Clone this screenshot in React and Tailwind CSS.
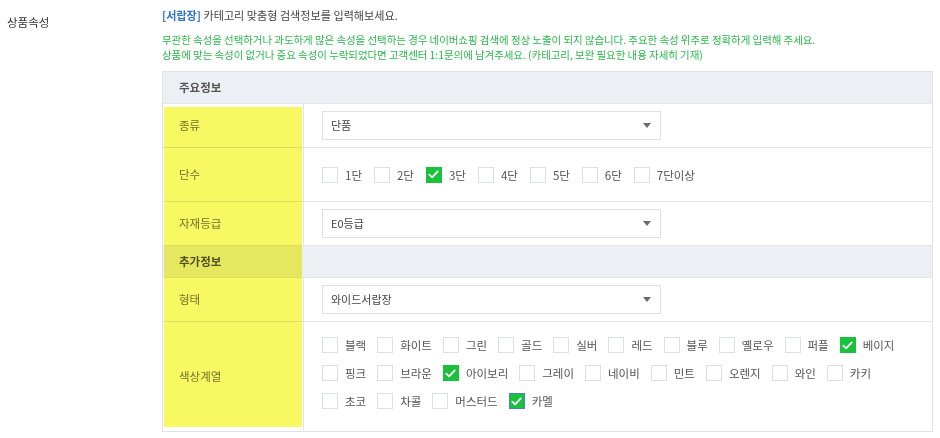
import { Fragment } from 'react';

const COLOR_ROWS = [
  [['블랙'], ['화이트'], ['그린'], ['골드'], ['실버'], ['레드'], ['블루'], ['옐로우'], ['퍼플'], ['베이지', true]],
  [['핑크'], ['브라운'], ['아이보리', true], ['그레이'], ['네이비'], ['민트'], ['오렌지'], ['와인'], ['카키']],
  [['초코'], ['차콜'], ['머스터드'], ['카멜', true, true]],
];

const TIERS = ['1단', '2단', '3단', '4단', '5단', '6단', '7단이상'];

function Check({ checked, focused, label, gap = 'mr-[11px]' }) {
  return (
    <label className={`flex items-center h-4 ${gap}`}>
      <span
        className={
          checked
            ? focused
              ? 'flex items-center justify-center w-4 h-4 bg-[#19c23c] border border-[#4a7fd6]'
              : 'flex items-center justify-center w-4 h-4 bg-[#19c23c] border border-[#19c23c]'
            : 'w-4 h-4 bg-white border border-[#dcdfe4]'
        }
      >
        {checked && (
          <svg width="11" height="9" viewBox="0 0 11 9" fill="none">
            <path d="M1.3 4.6l2.8 2.7L9.7 1.5" stroke="#fff" strokeWidth="1.8" strokeLinecap="round" strokeLinejoin="round" />
          </svg>
        )}
      </span>
      <span className="ml-[7px] text-[11.5px] leading-4 text-[#555]">{label}</span>
    </label>
  );
}

function Select({ value }) {
  return (
    <div className="flex items-center justify-between w-[339px] h-[29px] border border-[#dfe1e6] bg-white pl-[8px] pr-[9px]">
      <span className="text-[11px] text-[#444]">{value}</span>
      <svg width="8" height="5" viewBox="0 0 8 5">
        <path d="M0 0h8L4 5z" fill="#6b6b6b" />
      </svg>
    </div>
  );
}

function Row({ label, height, children }) {
  return (
    <div className={`flex border-b border-[#e4e6ea] ${height}`}>
      <div className="flex items-center w-[141px] shrink-0 border-r border-[#e4e6ea] pl-[16px] text-[11.5px] text-[#777]">
        {label}
      </div>
      <div className="flex-1 flex items-center pl-[18px]">{children}</div>
    </div>
  );
}

function Section({ title }) {
  return (
    <div className="flex items-center h-[32px] border-b border-[#e4e6ea] bg-[#eceff3] pl-[16px] text-[11.5px] font-bold text-[#555]">
      {title}
    </div>
  );
}

export default function App() {
  return (
    <div className="flex bg-white min-h-[438px] font-['Noto_Sans_CJK_KR','Noto_Sans',sans-serif]">
      <div className="w-[162px] shrink-0 pl-[7px] pt-[14px] text-[11.5px] leading-4 text-[#333]">상품속성</div>

      <div className="w-[771px] pt-[7px]">
        <p className="text-[11.1px] leading-4 text-[#444]">
          <b className="text-[#2f74d0]">[서랍장]</b> 카테고리 맞춤형 검색정보를 입력해보세요.
        </p>
        <div className="mt-[9px] text-[10.5px] leading-[15px] tracking-[-0.07px] text-[#2cb84d]">
          <p>무관한 속성을 선택하거나 과도하게 많은 속성을 선택하는 경우 네이버쇼핑 검색에 정상 노출이 되지 않습니다. 주요한 속성 위주로 정확하게 입력해 주세요.</p>
          <p>상품에 맞는 속성이 없거나 중요 속성이 누락되었다면 고객센터 1:1문의에 남겨주세요. (카테고리, 보완 필요한 내용 자세히 기재)</p>
        </div>

        <div className="relative mt-[9px] border border-[#dfe2e7]">
          <Section title="주요정보" />
          <Row label="종류" height="h-[44px]">
            <Select value="단품" />
          </Row>
          <Row label="단수" height="h-[54px]">
            {TIERS.map((t) => (
              <Check key={t} label={t} checked={t === '3단'} gap="mr-[12px]" />
            ))}
          </Row>
          <Row label="자재등급" height="h-[44px]">
            <Select value="E0등급" />
          </Row>
          <Section title="추가정보" />
          <Row label="형태" height="h-[44px]">
            <Select value="와이드서랍장" />
          </Row>
          <div className="flex h-[109px]">
            <div className="flex items-center w-[141px] shrink-0 border-r border-[#e4e6ea] pl-[16px] text-[11.5px] text-[#777]">
              색상계열
            </div>
            <div className="flex-1 flex flex-col gap-y-[12px] pt-[15px] pl-[18px]">
              {COLOR_ROWS.map((row, i) => (
                <div key={i} className="flex">
                  {row.map(([name, checked, focused]) => (
                    <Fragment key={name}>
                      <Check label={name} checked={checked} focused={focused} />
                    </Fragment>
                  ))}
                </div>
              ))}
            </div>
          </div>

          {/* highlighter mark over the label column */}
          <div className="absolute left-[1px] top-[35px] w-[138px] h-[320px] bg-[#f8f862] mix-blend-multiply pointer-events-none" />
        </div>
      </div>
    </div>
  );
}
